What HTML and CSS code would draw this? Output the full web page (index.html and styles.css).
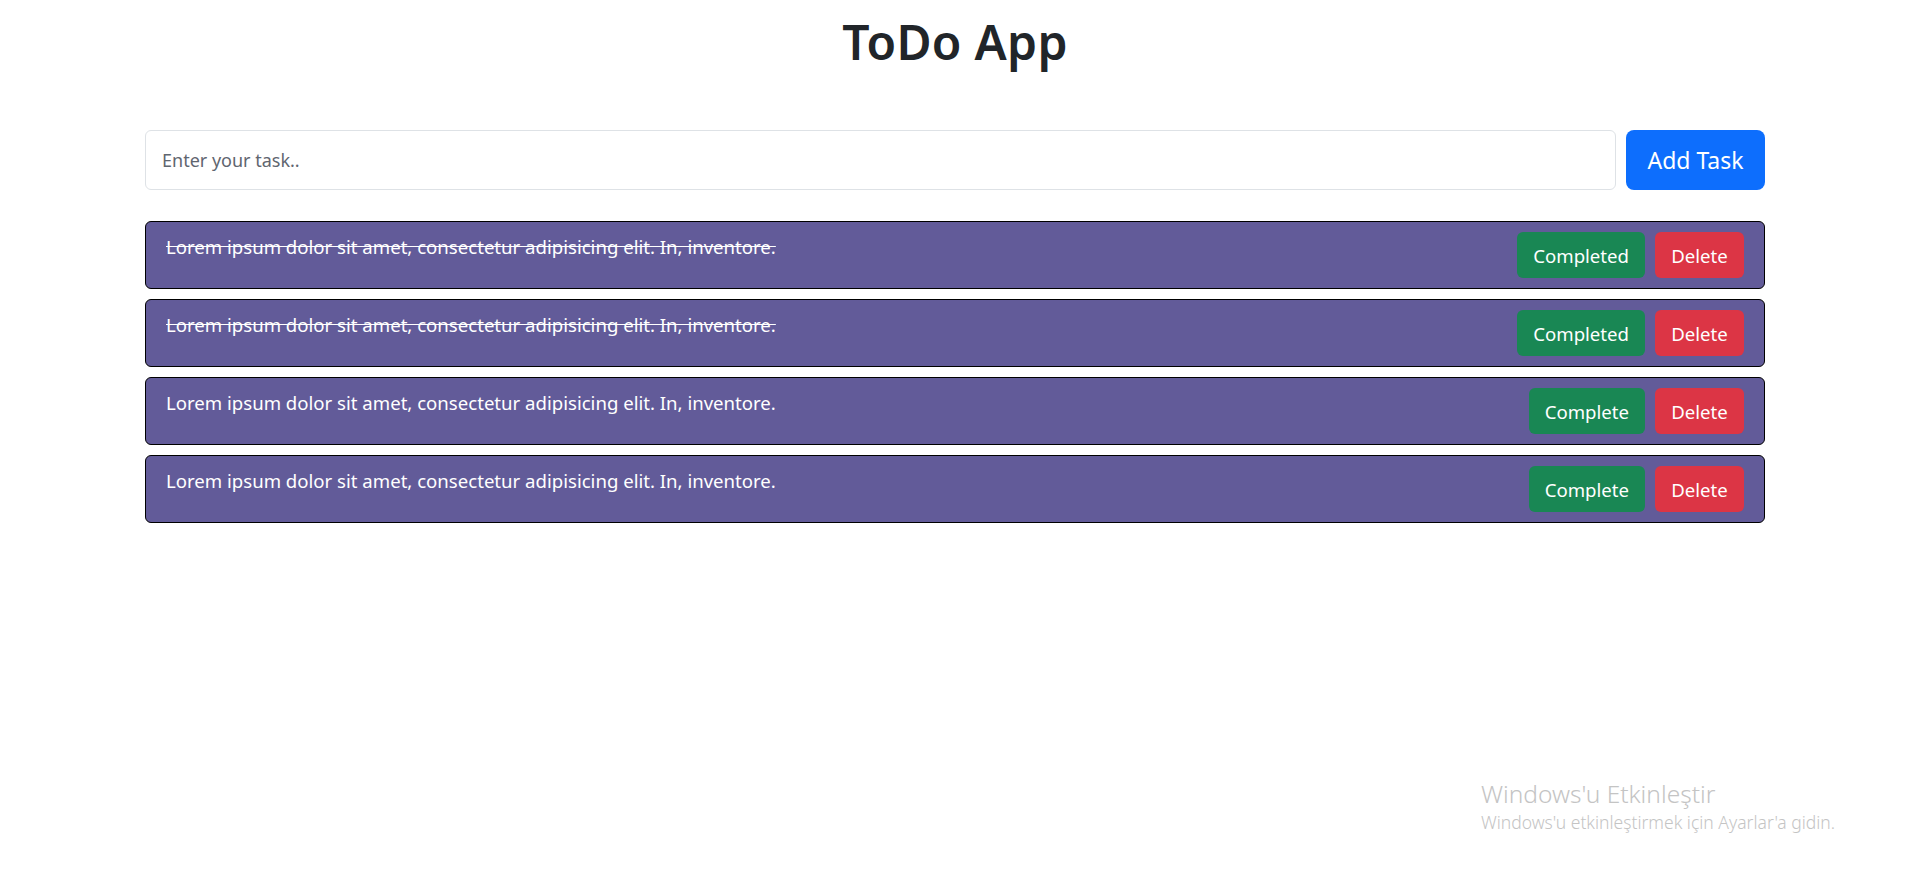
FILE: index.html
```html
<!DOCTYPE html>
<html lang="tr">
<head>
<meta charset="utf-8">
<title>ToDo App</title>
<link rel="stylesheet" href="styles.css">
</head>
<body>
<main class="container">
  <h1 class="title">ToDo App</h1>
  <form class="task-form">
    <input class="task-input" type="text" placeholder="Enter your task..">
    <button class="btn btn-add" type="button">Add Task</button>
  </form>
  <ul class="task-list">
    <li class="task">
      <span class="task-text done">Lorem ipsum dolor sit amet, consectetur adipisicing elit. In, inventore.</span>
      <div class="task-actions">
        <button class="btn btn-green" type="button">Completed</button>
        <button class="btn btn-red" type="button">Delete</button>
      </div>
    </li>
    <li class="task">
      <span class="task-text done">Lorem ipsum dolor sit amet, consectetur adipisicing elit. In, inventore.</span>
      <div class="task-actions">
        <button class="btn btn-green" type="button">Completed</button>
        <button class="btn btn-red" type="button">Delete</button>
      </div>
    </li>
    <li class="task">
      <span class="task-text">Lorem ipsum dolor sit amet, consectetur adipisicing elit. In, inventore.</span>
      <div class="task-actions">
        <button class="btn btn-green" type="button">Complete</button>
        <button class="btn btn-red" type="button">Delete</button>
      </div>
    </li>
    <li class="task">
      <span class="task-text">Lorem ipsum dolor sit amet, consectetur adipisicing elit. In, inventore.</span>
      <div class="task-actions">
        <button class="btn btn-green" type="button">Complete</button>
        <button class="btn btn-red" type="button">Delete</button>
      </div>
    </li>
  </ul>
</main>
<div class="watermark">
  <div class="wm-title">Windows'u Etkinleştir</div>
  <div class="wm-sub">Windows'u etkinleştirmek için Ayarlar'a gidin.</div>
</div>
</body>
</html>
```

FILE: styles.css
```css
* { box-sizing: border-box; }

html, body {
  margin: 0;
  padding: 0;
  background: #fff;
}

body {
  font-family: "Noto Sans", "Open Sans", sans-serif;
  color: #212529;
  width: 1914px;
  height: 878px;
  overflow: hidden;
  position: relative;
}

.container {
  margin: 0 149px 0 145px;
}

.title {
  margin: 0;
  padding-top: 12px;
  text-align: center;
  font-size: 48px;
  font-weight: 600;
  line-height: 60px;
  letter-spacing: 0.3px;
}

.task-form {
  display: flex;
  gap: 10px;
  margin-top: 58px;
  height: 60px;
}

.task-input {
  flex: 1;
  height: 60px;
  border: 1px solid #dee2e6;
  border-radius: 6px;
  padding: 0 16px;
  font-family: inherit;
  font-size: 18px;
  color: #212529;
  outline: none;
}

.task-input::placeholder {
  color: #5f6670;
}

.btn {
  font-family: inherit;
  border: 0;
  border-radius: 6px;
  color: #fff;
  cursor: pointer;
}

.btn-add {
  width: 139px;
  height: 60px;
  background: #0d6efd;
  font-size: 23px;
  border-radius: 8px;
}

.task-list {
  list-style: none;
  margin: 31px 0 0;
  padding: 0;
  display: flex;
  flex-direction: column;
  gap: 10px;
}

.task {
  display: flex;
  justify-content: space-between;
  align-items: flex-start;
  background: #625b99;
  border: 1px solid #000;
  border-radius: 6px;
  padding: 10px 20px;
  height: 68px;
}

.task-text {
  color: #fff;
  font-size: 18.6px;
  line-height: 24px;
  padding-top: 3px;
}

.task-text.done {
  text-decoration: line-through;
}

.task-actions {
  display: flex;
  gap: 10px;
}

.task-actions .btn {
  height: 46px;
  font-size: 18.6px;
  padding: 0 16px;
}

.btn-green { background: #198754; }
.btn-red { background: #dc3545; width: 89px; }

.watermark {
  position: absolute;
  left: 1481px;
  top: 778px;
  color: #c4c4c4;
  font-family: "Noto Sans", sans-serif;
  pointer-events: none;
}

.wm-title {
  font-size: 24.5px;
  line-height: 32px;
  font-weight: 300;
}

.wm-sub {
  font-size: 17.5px;
  line-height: 24px;
  font-weight: 300;
}
```
